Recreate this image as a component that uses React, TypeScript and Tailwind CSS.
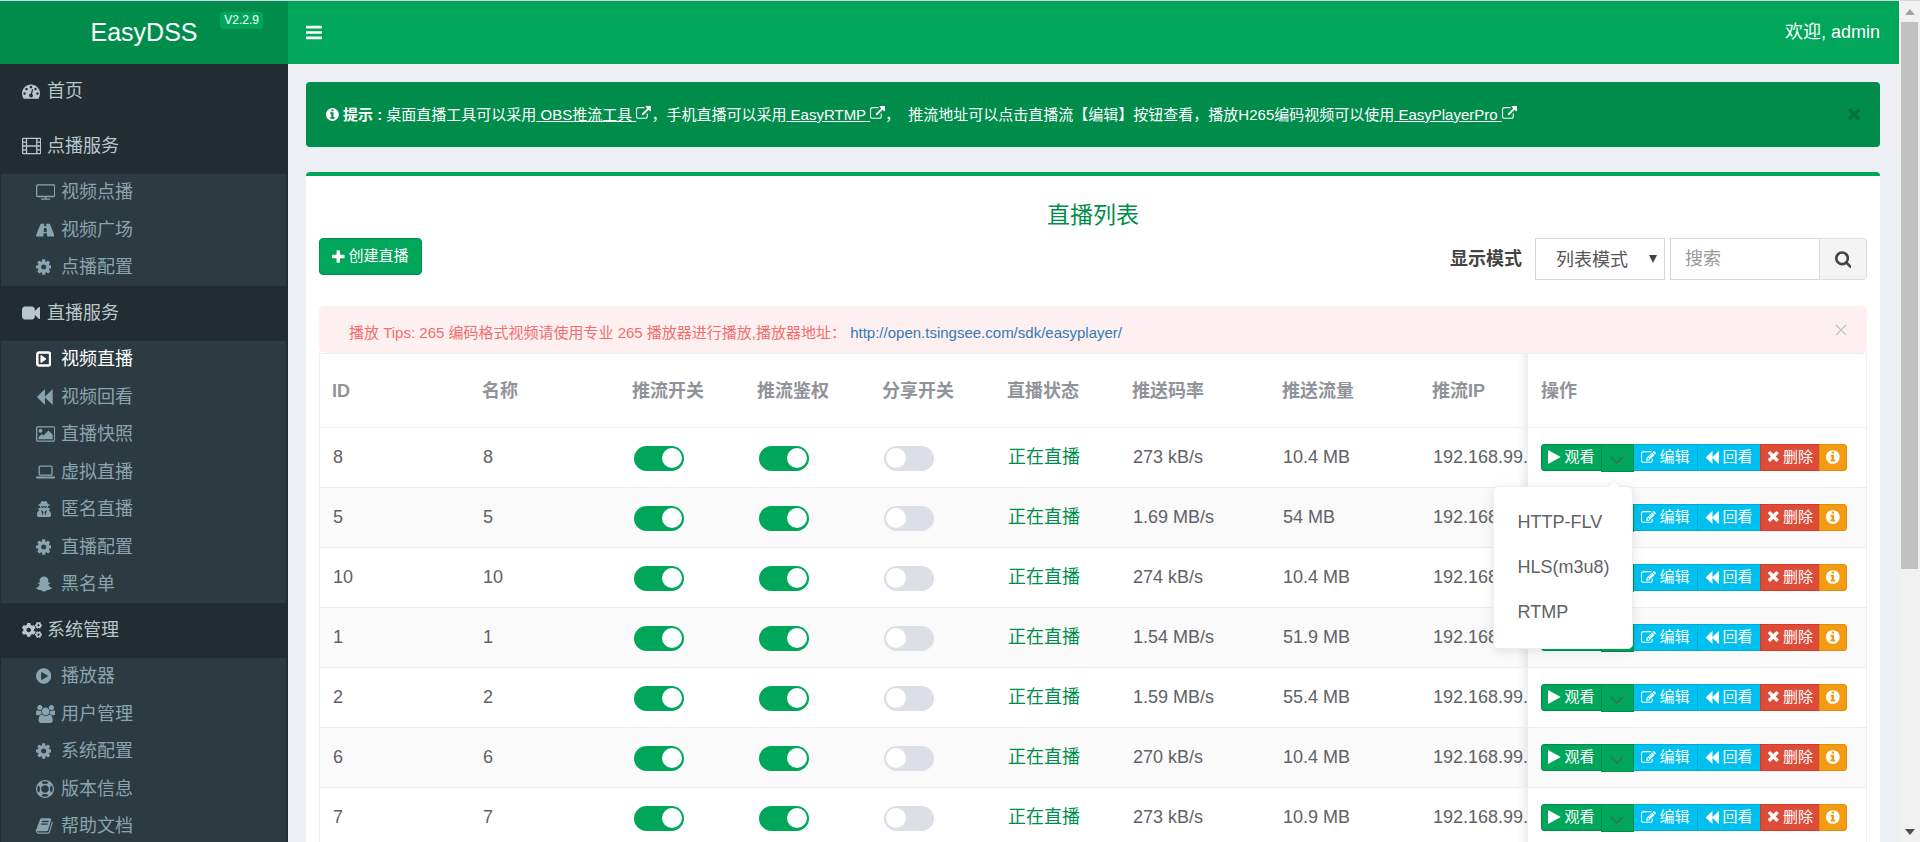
import React, { useState } from 'react'
import { FaCogs, FaSnapchatGhost, FaUserSecret } from 'react-icons/fa'
import { clsx } from 'clsx'

interface GlyphProps {
  name: keyof typeof glyphs
  className?: string
}

// [viewBox, path]
const glyphs = {
  bars: ['128 0 1536 1792', 'M1664 1344v128q0 26-19 45t-45 19h-1408q-26 0-45-19t-19-45v-128q0-26 19-45t45-19h1408q26 0 45 19t19 45zm0-512v128q0 26-19 45t-45 19h-1408q-26 0-45-19t-19-45v-128q0-26 19-45t45-19h1408q26 0 45 19t19 45zm0-512v128q0 26-19 45t-45 19h-1408q-26 0-45-19t-19-45v-128q0-26 19-45t45-19h1408q26 0 45 19t19 45z'],
  dashboard: ['0 0 1792 1792', 'M384 1152q0-53-37.5-90.5t-90.5-37.5-90.5 37.5-37.5 90.5 37.5 90.5 90.5 37.5 90.5-37.5 37.5-90.5zm192-448q0-53-37.5-90.5t-90.5-37.5-90.5 37.5-37.5 90.5 37.5 90.5 90.5 37.5 90.5-37.5 37.5-90.5zm428 481l101-382q6-26-7.5-48.5t-38.5-29.5-48 6.5-30 39.5l-101 382q-60 5-107 43.5t-63 98.5q-20 77 20 146t117 89 146-20 89-117q16-60-6-117t-72-91zm660-33q0-53-37.5-90.5t-90.5-37.5-90.5 37.5-37.5 90.5 37.5 90.5 90.5 37.5 90.5-37.5 37.5-90.5zm-640-640q0-53-37.5-90.5t-90.5-37.5-90.5 37.5-37.5 90.5 37.5 90.5 90.5 37.5 90.5-37.5 37.5-90.5zm448 192q0-53-37.5-90.5t-90.5-37.5-90.5 37.5-37.5 90.5 37.5 90.5 90.5 37.5 90.5-37.5 37.5-90.5zm320 448q0 261-141 483-19 29-54 29h-1402q-35 0-54-29-141-221-141-483 0-182 71-348t191-286 286-191 348-71 348 71 286 191 191 286 71 348z'],
  film: ['0 0 1920 1792', 'M160 64h1600q66 0 113 47t47 113v1344q0 66-47 113t-113 47h-1600q-66 0-113-47t-47-113v-1344q0-66 47-113t113-47zM128 192v256h256v-256zM128 576v256h256v-256zM128 960v256h256v-256zM128 1344v256h256v-256zM512 192v640h896v-640zM512 960v640h896v-640zM1536 192v256h256v-256zM1536 576v256h256v-256zM1536 960v256h256v-256zM1536 1344v256h256v-256z'],
  tv: ['0 0 1920 1792', 'M1792 1248v-960q0-13-9.5-22.5t-22.5-9.5h-1600q-13 0-22.5 9.5t-9.5 22.5v960q0 13 9.5 22.5t22.5 9.5h1600q13 0 22.5-9.5t9.5-22.5zm128-960v960q0 66-47 113t-113 47h-736v128h352q14 0 23 9t9 23v64q0 14-9 23t-23 9h-832q-14 0-23-9t-9-23v-64q0-14 9-23t23-9h352v-128h-736q-66 0-113-47t-47-113v-960q0-66 47-113t113-47h1600q66 0 113 47t47 113z'],
  road: ['40 0 1840 1792', 'M1111 1061v-4l-24-320q-1-13-11-22.5t-23-9.5h-186q-13 0-23 9.5t-11 22.5l-24 320v4q-1 12 8 20t21 8h244q12 0 21-8t8-20zm759 407q0 73-46 73h-704q13 0 22-9.5t8-22.5l-20-256q-1-13-11-22.5t-23-9.5h-272q-13 0-23 9.5t-11 22.5l-20 256q-1 13 8 22.5t22 9.5h-704q-46 0-46-73 0-54 26-116l417-1044q8-19 26-33t38-14h339q-13 0-23 9.5t-11 22.5l-15 192q-1 14 8 23t22 9h166q13 0 22-9t8-23l-15-192q-1-13-11-22.5t-23-9.5h339q20 0 38 14t26 33l417 1044q26 62 26 116z'],
  cog: ['128 0 1536 1792', 'M1152 896q0-106-75-181t-181-75-181 75-75 181 75 181 181 75 181-75 75-181zm512-109v222q0 12-8 23t-20 13l-185 28q-19 54-39 91 35 50 107 138 10 12 10 25t-9 23q-27 37-99 108t-94 71q-12 0-26-9l-138-108q-44 23-91 38-16 136-29 186-7 28-36 28h-222q-14 0-24.5-8.5t-11.5-21.5l-28-184q-49-16-90-37l-141 107q-10 9-25 9-14 0-25-11-126-114-165-168-7-10-7-23 0-12 8-23 15-21 51-66.5t54-70.5q-27-50-41-99l-183-27q-13-2-21-12.5t-8-23.5v-222q0-12 8-23t19-13l186-28q14-46 39-92-40-57-107-138-10-12-10-24 0-10 9-23 26-36 98.5-107.5t94.5-71.5q13 0 26 10l138 107q44-23 91-38 16-136 29-186 7-28 36-28h222q14 0 24.5 8.5t11.5 21.5l28 184q49 16 90 37l142-107q9-9 24-9 13 0 25 10 129 119 165 170 7 8 7 22 0 12-8 23-15 21-51 66.5t-54 70.5q26 50 41 98l183 28q13 2 21 12.5t8 23.5z'],
  video: ['0 0 1792 1792', 'M1792 352v1088q0 42-39 59-13 5-25 5-27 0-45-19l-403-403v166q0 119-84.5 203.5t-203.5 84.5h-704q-119 0-203.5-84.5t-84.5-203.5v-704q0-119 84.5-203.5t203.5-84.5h704q119 0 203.5 84.5t84.5 203.5v165l403-402q18-19 45-19 12 0 25 5 39 17 39 59z'],
  playSquare: ['128 0 1536 1792', 'M1145 896q0 33-27 52l-448 320q-31 23-66 5-35-17-35-57v-640q0-40 35-57 35-18 66 5l448 320q27 19 27 52zm263 480v-960q0-14-9-23t-23-9h-960q-14 0-23 9t-9 23v960q0 14 9 23t23 9h960q14 0 23-9t9-23zm256-960v960q0 119-84.5 203.5t-203.5 84.5h-960q-119 0-203.5-84.5t-84.5-203.5v-960q0-119 84.5-203.5t203.5-84.5h960q119 0 203.5 84.5t84.5 203.5z'],
  backward: ['64 0 1664 1792', 'M1683 141q19-19 32-13t13 32v1472q0 26-13 32t-32-13l-710-710q-9-9-13-19v710q0 26-13 32t-32-13l-710-710q-19-19-19-45t19-45l710-710q19-19 32-13t13 32v710q4-10 13-19z'],
  picture: ['-64 0 1920 1792', 'M576 576q0 80-56 136t-136 56-136-56-56-136 56-136 136-56 136 56 56 136zm1024 384v448h-1408v-192l320-320 160 160 512-512zm96-704h-1600q-13 0-22.5 9.5t-9.5 22.5v1216q0 13 9.5 22.5t22.5 9.5h1600q13 0 22.5-9.5t9.5-22.5v-1216q0-13-9.5-22.5t-22.5-9.5zm160 32v1216q0 66-47 113t-113 47h-1600q-66 0-113-47t-47-113v-1216q0-66 47-113t113-47h1600q66 0 113 47t47 113z'],
  laptop: ['0 -128 1920 1792', 'M416 1152q-66 0-113-47t-47-113v-704q0-66 47-113t113-47h1088q66 0 113 47t47 113v704q0 66-47 113t-113 47h-1088zm-32-864v704q0 13 9.5 22.5t22.5 9.5h1088q13 0 22.5-9.5t9.5-22.5v-704q0-13-9.5-22.5t-22.5-9.5h-1088q-13 0-22.5 9.5t-9.5 22.5zm1376 928h160v96q0 40-47 68t-113 28h-1600q-66 0-113-28t-47-68v-96h1760zm-720 96q16 0 16-16t-16-16h-160q-16 0-16 16t16 16h160z'],
  playCircle: ['128 0 1536 1792', 'M896 128q209 0 385.5 103t279.5 279.5 103 385.5-103 385.5-279.5 279.5-385.5 103-385.5-103-279.5-279.5-103-385.5 103-385.5 279.5-279.5 385.5-103zm384 823q32-18 32-55t-32-55l-544-320q-31-19-64-1-32 19-32 56v640q0 37 32 56 16 8 32 8 17 0 32-9z'],
  users: ['0 0 1920 1792', 'M593 896q-162 5-265 128h-134q-82 0-138-40.5t-56-118.5q0-353 124-353 6 0 43.5 21t97.5 42.5 119 21.5q67 0 133-23-5 37-5 66 0 139 81 256zm1071 637q0 120-73 189.5t-194 69.5h-874q-121 0-194-69.5t-73-189.5q0-53 3.5-103.5t14-109 26.5-108.5 43-97.5 62-81 85.5-53.5 111.5-20q10 0 43 21.5t73 48 107 48 135 21.5 135-21.5 107-48 73-48 43-21.5q61 0 111.5 20t85.5 53.5 62 81 43 97.5 26.5 108.5 14 109 3.5 103.5zm-1024-1277q0 106-75 181t-181 75-181-75-75-181 75-181 181-75 181 75 75 181zm704 384q0 159-112.5 271.5t-271.5 112.5-271.5-112.5-112.5-271.5 112.5-271.5 271.5-112.5 271.5 112.5 112.5 271.5zm576 225q0 78-56 118.5t-138 40.5h-134q-103-123-265-128 81-117 81-256 0-29-5-66 66 23 133 23 59 0 119-21.5t97.5-42.5 43.5-21q124 0 124 353zm-128-609q0 106-75 181t-181 75-181-75-75-181 75-181 181-75 181 75 75 181z'],
  lifeRing: ['0 0 1792 1792', 'M896 0q182 0 348 71t286 191 191 286 71 348-71 348-191 286-286 191-348 71-348-71-286-191-191-286-71-348 71-348 191-286 286-191 348-71zm0 128q-190 0-361 90l194 194q82-28 167-28t167 28l194-194q-171-90-361-90zm-678 1129l194-194q-28-82-28-167t28-167l-194-194q-90 171-90 361t90 361zm678 407q190 0 361-90l-194-194q-82 28-167 28t-167-28l-194 194q171 90 361 90zm0-384q159 0 271.5-112.5t112.5-271.5-112.5-271.5-271.5-112.5-271.5 112.5-112.5 271.5 112.5 271.5 271.5 112.5zm484-217l194 194q90-171 90-361t-90-361l-194 194q28 82 28 167t-28 167z'],
  book: ['64 0 1664 1792', 'M1703 478q40 57 18 129l-275 906q-19 64-76.5 107.5t-122.5 43.5h-923q-77 0-148.5-53.5t-99.5-131.5q-24-67-2-127 0-4 3-27t4-37q1-8-3-21.5t-3-19.5q2-11 8-21t16.5-23.5 16.5-23.5q23-38 45-91.5t30-91.5q3-10 .5-30t-.5-28q3-11 17-28t17-23q21-36 42-92t25-90q1-9-2.5-32t.5-28q4-13 22-30.5t22-22.5q19-26 42.5-84.5t27.5-96.5q1-8-3-25.5t-2-26.5q2-8 9-18t18-23 17-21q8-12 16.5-30.5t15-35 16-36 19.5-32 26.5-23.5 36-11.5 47.5 5.5l-1 3q38-9 51-9h761q74 0 114 56t18 130l-274 906q-36 119-71.5 153.5t-128.5 34.5h-869q-27 0-38 15-11 16-1 43 24 70 144 70h923q29 0 56-15.5t35-41.5l300-987q7-22 5-57 38 15 59 43zm-1064 2q-4 13 2 22.5t20 9.5h608q13 0 25.5-9.5t16.5-22.5l21-64q4-13-2-22.5t-20-9.5h-608q-13 0-25.5 9.5t-16.5 22.5zm-83 256q-4 13 2 22.5t20 9.5h608q13 0 25.5-9.5t16.5-22.5l21-64q4-13-2-22.5t-20-9.5h-608q-13 0-25.5 9.5t-16.5 22.5z'],
  info: ['128 0 1536 1792', 'M1152 1376v-160q0-14-9-23t-23-9h-96v-512q0-14-9-23t-23-9h-320q-14 0-23 9t-9 23v160q0 14 9 23t23 9h96v320h-96q-14 0-23 9t-9 23v160q0 14 9 23t23 9h448q14 0 23-9t9-23zm-128-896v-160q0-14-9-23t-23-9h-192q-14 0-23 9t-9 23v160q0 14 9 23t23 9h192q14 0 23-9t9-23zm640 416q0 209-103 385.5t-279.5 279.5-385.5 103-385.5-103-279.5-279.5-103-385.5 103-385.5 279.5-279.5 385.5-103 385.5 103 279.5 279.5 103 385.5z'],
  external: ['0 0 1792 1792', 'M1408 928v320q0 119-84.5 203.5t-203.5 84.5h-832q-119 0-203.5-84.5t-84.5-203.5v-832q0-119 84.5-203.5t203.5-84.5h704q14 0 23 9t9 23v64q0 14-9 23t-23 9h-704q-66 0-113 47t-47 113v832q0 66 47 113t113 47h832q66 0 113-47t47-113v-320q0-14 9-23t23-9h64q14 0 23 9t9 23zm384-864v512q0 26-19 45t-45 19-45-19l-176-176-652 652q-10 10-23 10t-23-10l-114-114q-10-10-10-23t10-23l652-652-176-176q-19-19-19-45t19-45 45-19h512q26 0 45 19t19 45z'],
  plus: ['192 0 1408 1792', 'M1600 736v192q0 40-28 68t-68 28h-416v416q0 40-28 68t-68 28h-192q-40 0-68-28t-28-68v-416h-416q-40 0-68-28t-28-68v-192q0-40 28-68t68-28h416v-416q0-40 28-68t68-28h192q40 0 68 28t28 68v416h416q40 0 68 28t28 68z'],
  times: ['192 128 1408 1792', 'M1490 1322q0 40-28 68l-136 136q-28 28-68 28t-68-28l-294-294-294 294q-28 28-68 28t-68-28l-136-136q-28-28-28-68t28-68l294-294-294-294q-28-28-28-68t28-68l136-136q28-28 68-28t68 28l294 294 294-294q28-28 68-28t68 28l136 136q28 28 28 68t-28 68l-294 294 294 294q28 28 28 68z'],
  search: ['64 0 1664 1792', 'M1216 832q0-185-131.5-316.5t-316.5-131.5-316.5 131.5-131.5 316.5 131.5 316.5 316.5 131.5 316.5-131.5 131.5-316.5zm512 832q0 52-38 90t-90 38q-54 0-90-38l-343-342q-179 124-399 124-143 0-273.5-55.5t-225-150-150-225-55.5-273.5 55.5-273.5 150-225 225-150 273.5-55.5 273.5 55.5 225 150 150 225 55.5 273.5q0 220-124 399l343 343q37 37 37 90z'],
  play: ['192 0 1408 1792', 'M1576 927l-1328 738q-23 13-39.5 3t-16.5-36v-1472q0-26 16.5-36t39.5 3l1328 738q23 13 23 31t-23 31z'],
  edit: ['0 0 1792 1792', 'M888 1184l116-116-152-152-116 116v56h96v96h56zm440-720q-16-16-33 1l-350 350q-17 17-1 33t33-1l350-350q17-17 1-33zm80 594v190q0 119-84.5 203.5t-203.5 84.5h-832q-119 0-203.5-84.5t-84.5-203.5v-832q0-119 84.5-203.5t203.5-84.5h832q63 0 117 25 15 7 18 23 3 17-9 29l-49 49q-14 14-32 8-23-6-45-6h-832q-66 0-113 47t-47 113v832q0 66 47 113t113 47h832q66 0 113-47t47-113v-126q0-13 9-22l64-64q15-15 35-7t20 29zm-96-738l288 288-672 672h-288v-288zm444 132l-92 92-288-288 92-92q28-28 68-28t68 28l152 152q28 28 28 68t-28 68z'],
}

const Glyph: React.FC<GlyphProps> = ({ name, className }) => (
  <svg
    viewBox={glyphs[name][0]}
    fill="currentColor"
    fillRule="evenodd"
    aria-hidden="true"
    className={clsx('w-auto shrink-0', className)}
  >
    <path d={glyphs[name][1]} />
  </svg>
)

const navIcon = (name: keyof typeof glyphs) => <Glyph name={name} className="h-[18px]" />

const menu = [
  { label: '首页', icon: navIcon('dashboard'), items: [] },
  {
    label: '点播服务',
    icon: navIcon('film'),
    items: [
      { label: '视频点播', icon: navIcon('tv') },
      { label: '视频广场', icon: navIcon('road') },
      { label: '点播配置', icon: navIcon('cog') },
    ],
  },
  {
    label: '直播服务',
    icon: navIcon('video'),
    items: [
      { label: '视频直播', icon: navIcon('playSquare'), active: true },
      { label: '视频回看', icon: navIcon('backward') },
      { label: '直播快照', icon: navIcon('picture') },
      { label: '虚拟直播', icon: navIcon('laptop') },
      { label: '匿名直播', icon: <FaUserSecret className="size-4" /> },
      { label: '直播配置', icon: navIcon('cog') },
      { label: '黑名单', icon: <FaSnapchatGhost className="size-4" /> },
    ],
  },
  {
    label: '系统管理',
    icon: <FaCogs className="size-5" />,
    items: [
      { label: '播放器', icon: navIcon('playCircle') },
      { label: '用户管理', icon: navIcon('users') },
      { label: '系统配置', icon: navIcon('cog') },
      { label: '版本信息', icon: navIcon('lifeRing') },
      { label: '帮助文档', icon: navIcon('book') },
    ],
  },
]

const streams = [
  { id: 8, name: '8', rate: '273 kB/s', flow: '10.4 MB' },
  { id: 5, name: '5', rate: '1.69 MB/s', flow: '54 MB' },
  { id: 10, name: '10', rate: '274 kB/s', flow: '10.4 MB' },
  { id: 1, name: '1', rate: '1.54 MB/s', flow: '51.9 MB' },
  { id: 2, name: '2', rate: '1.59 MB/s', flow: '55.4 MB' },
  { id: 6, name: '6', rate: '270 kB/s', flow: '10.4 MB' },
  { id: 7, name: '7', rate: '273 kB/s', flow: '10.9 MB' },
]

const columns = [
  { title: 'ID', width: 'w-[150px]' },
  { title: '名称', width: 'w-[150px]' },
  { title: '推流开关', width: 'w-[125px]' },
  { title: '推流鉴权', width: 'w-[125px]' },
  { title: '分享开关', width: 'w-[125px]' },
  { title: '直播状态', width: 'w-[125px]' },
  { title: '推送码率', width: 'w-[150px]' },
  { title: '推送流量', width: 'w-[150px]' },
]

const edgeShade = 'bg-[linear-gradient(to_left,rgba(0,0,0,0.07),transparent_10px)]'

const Sidebar = () => (
  <nav className="w-72 shrink-0 bg-[#222d32] text-[18px] leading-6">
    {menu.map((group) => (
      <div key={group.label}>
        <a href="#" className="flex h-[55px] items-center pb-0.5 pl-[22px] text-[#b8c7ce]">
          <span className="flex w-[25px]">{group.icon}</span>
          {group.label}
        </a>
        {group.items.length > 0 && (
          <ul className="mr-0.5 ml-px bg-[#2c3b41]">
            {group.items.map((item) => (
              <li key={item.label} className="even:pt-px">
                <a
                  href="#"
                  className={clsx(
                    'flex h-[37px] items-center pb-0.5 pl-[35px]',
                    'active' in item ? 'text-white' : 'text-[#8aa4af]'
                  )}
                >
                  <span className="flex w-[25px]">{item.icon}</span>
                  {item.label}
                </a>
              </li>
            ))}
          </ul>
        )}
      </div>
    ))}
  </nav>
)

const Switch: React.FC<{ label: string; on?: boolean }> = ({ label, on = false }) => {
  const [checked, setChecked] = useState(on)

  return (
    <input
      type="checkbox"
      aria-label={label}
      checked={checked}
      onChange={() => setChecked(!checked)}
      className="mt-1 ml-px block h-[25px] w-[50px] appearance-none rounded-full bg-[#dcdfe6] p-[2px] before:block before:size-5 before:rounded-full before:bg-white checked:bg-[#00a65a] checked:before:translate-x-[26px]"
    />
  )
}

const PlayMenu = () => (
  <div className="absolute top-full right-px z-10 mt-3.5 w-[140px] rounded-[5px] border border-[#ebeef5] bg-white py-[13px] text-[18px] text-[#606266] shadow-[0_2px_12px_rgba(0,0,0,0.1)]">
    <svg viewBox="0 0 14 8" className="absolute -top-[7px] right-[11px] h-2 w-3.5" aria-hidden="true">
      <path d="M0 8 7 1l7 7z" fill="#fff" />
      <path d="M0 7.500 7 .5l7 7" fill="none" stroke="#ebeef5" />
    </svg>
    {['HTTP-FLV', 'HLS(m3u8)', 'RTMP'].map((format) => (
      <button key={format} type="button" className="block h-[45px] w-full pl-6 text-left">
        {format}
      </button>
    ))}
  </div>
)

const RowActions: React.FC<{ open: boolean; onToggle: () => void }> = ({ open, onToggle }) => (
  <div className="flex items-start pt-0.5 text-[15px] leading-5 text-white">
    <button type="button" className="flex h-[27px] items-center gap-1 rounded-l-[3px] border border-[#008d4c] bg-[#00a65a] px-1.5">
      <Glyph name="play" className="h-4" />
      观看
    </button>
    <div className="relative -ml-px">
      <button
        type="button"
        aria-label="选择格式"
        onClick={onToggle}
        className="flex h-7 w-[33px] items-center justify-center border border-[#008d4c] bg-[#00a65a] text-[#4f5f5a]"
      >
        <svg viewBox="0 0 14 8" className="mt-1 h-2 w-3.5 shrink-0" aria-hidden="true">
          <path d="m1 1 6 6 6-6" fill="none" stroke="currentColor" strokeWidth="1.1" />
        </svg>
      </button>
      {open && <PlayMenu />}
    </div>
    <button type="button" className="-ml-px flex h-[27px] items-center gap-1 border border-[#00acd6] bg-[#00c0ef] px-[7px]">
      <Glyph name="edit" className="h-[15px]" />
      编辑
    </button>
    <button type="button" className="-ml-px flex h-[27px] items-center gap-1 border border-[#00acd6] bg-[#00c0ef] px-[7px]">
      <Glyph name="backward" className="h-[15px]" />
      回看
    </button>
    <button type="button" className="-ml-px flex h-[27px] items-center gap-1 border border-[#d73925] bg-[#dd4b39] px-1.5">
      <Glyph name="times" className="h-4" />
      删除
    </button>
    <button
      type="button"
      aria-label="信息"
      className="-ml-px flex h-[27px] items-center rounded-r-[3px] border border-[#e08e0b] bg-[#f39c12] px-1.5"
    >
      <Glyph name="info" className="h-4" />
    </button>
  </div>
)

const StreamTable = () => {
  const [openId, setOpenId] = useState<number | null>(8)

  return (
    <table className="w-full table-fixed border-separate border-spacing-0 border-x border-t border-[#ebeef5] text-left leading-6 whitespace-nowrap">
      <thead className="text-[#909399]">
        <tr className="h-[74px]">
          {columns.map((column) => (
            <th key={column.title} className={clsx('border-b border-[#ebeef5] pl-3 font-bold', column.width)}>
              {column.title}
            </th>
          ))}
          <th className={clsx('overflow-hidden border-b border-[#ebeef5] pl-3 font-bold', edgeShade)}>推流IP</th>
          <th className="w-[338px] border-b border-[#ebeef5] pl-[13px] font-bold">操作</th>
        </tr>
      </thead>
      <tbody className="text-[#606266] [&_td]:border-b [&_td]:border-[#ebeef5] [&_td]:pb-0.5 [&_td]:pl-[13px]">
        {streams.map((stream) => (
          <tr key={stream.id} className="h-[60px] even:bg-[#fafafa]">
            <td>{stream.id}</td>
            <td>{stream.name}</td>
            <td>
              <Switch label="推流开关" on />
            </td>
            <td>
              <Switch label="推流鉴权" on />
            </td>
            <td>
              <Switch label="分享开关" />
            </td>
            <td className="text-[#008d4c]">正在直播</td>
            <td>{stream.rate}</td>
            <td>{stream.flow}</td>
            <td className={clsx('overflow-hidden', edgeShade)}>192.168.99.1</td>
            <td>
              <RowActions
                open={openId === stream.id}
                onToggle={() => setOpenId(openId === stream.id ? null : stream.id)}
              />
            </td>
          </tr>
        ))}
      </tbody>
    </table>
  )
}

const TipLink: React.FC<{ children: string }> = ({ children }) => (
  <a href="#">
    <span className="whitespace-pre underline">{` ${children} `}</span>
    <Glyph name="external" className="inline-block h-[15px] align-[-1px]" />
  </a>
)

const App = () => (
  <div className="flex h-screen overflow-hidden border-t border-[#d2d6de] bg-[#ecf0f5] font-['Liberation_Sans','Noto_Sans_CJK_SC',sans-serif] text-[18px] text-[#333]">
    <div className="flex min-w-0 flex-1 flex-col">
      <header className="flex h-[63px] shrink-0 bg-[#00a65a] text-white">
        <a href="#" className="relative flex w-72 shrink-0 items-center justify-center bg-[#008d4c] text-[25px]">
          EasyDSS
          <span className="absolute top-[11px] right-[25px] rounded-[4px] bg-[#00a65a] px-1 text-xs leading-[17px]">
            V2.2.9
          </span>
        </a>
        <div className="flex flex-1 items-center justify-between pr-[19px] pl-[18px]">
          <button type="button" aria-label="菜单">
            <Glyph name="bars" className="h-[19px]" />
          </button>
          <a href="#">欢迎, admin</a>
        </div>
      </header>

      <div className="flex min-h-0 flex-1">
        <Sidebar />

        <main className="min-w-0 flex-1 pt-[18px] pr-[19px] pl-[18px]">
          <div className="flex h-[65px] items-center justify-between rounded-[4px] bg-[#008d4c] pr-[19px] pl-5 text-[15px] leading-6 text-white">
            <p className="whitespace-pre">
              <Glyph name="info" className="inline-block h-[15px] align-[-2px]" />
              <b>{' 提示 : '}</b>
              桌面直播工具可以采用
              <TipLink>OBS推流工具</TipLink>
              ，手机直播可以采用
              <TipLink>EasyRTMP</TipLink>
              {'，  推流地址可以点击直播流【编辑】按钮查看，播放H265编码视频可以使用'}
              <TipLink>EasyPlayerPro</TipLink>
            </p>
            <button type="button" aria-label="关闭" className="text-black/20">
              <Glyph name="times" className="h-[18px]" />
            </button>
          </div>

          <section className="mt-[25px] rounded-[4px] border-t-4 border-[#00a65a] bg-white px-[13px] pt-[25px] pb-4 shadow-[0_1px_1px_rgba(0,0,0,0.1)]">
            <h4 className="text-center text-[23px] leading-7 text-[#008d4c]">直播列表</h4>

            <div className="mt-[9px] flex items-start justify-between">
              <button
                type="button"
                className="flex h-[37px] items-center gap-1 rounded-[4px] border border-[#008d4c] bg-[#00a65a] px-3 text-[15px] text-white"
              >
                <Glyph name="plus" className="h-4" />
                创建直播
              </button>

              <form className="flex items-center" onSubmit={(e) => e.preventDefault()}>
                <label htmlFor="mode" className="mr-[13px] font-bold text-[#444]">
                  显示模式
                </label>
                <div className="relative mr-[5px]">
                  <select
                    id="mode"
                    className="block h-[42px] w-[130px] appearance-none border border-[#d2d6de] bg-white pt-0.5 pl-5 text-[#555]"
                  >
                    <option>列表模式</option>
                  </select>
                  <svg viewBox="0 0 8 8" className="pointer-events-none absolute top-[17px] right-2 size-2 text-[#444]" aria-hidden="true">
                    <path d="M0 0h8L4 8z" fill="currentColor" />
                  </svg>
                </div>
                <input
                  type="text"
                  aria-label="搜索"
                  placeholder="搜索"
                  className="h-[42px] w-[149px] border border-r-0 border-[#d2d6de] px-3.5 placeholder:text-[#999]"
                />
                <button
                  type="submit"
                  aria-label="搜索"
                  className="flex h-[42px] w-12 items-center justify-center rounded-r-[4px] border border-[#ddd] bg-[#f4f4f4] text-[#444]"
                >
                  <Glyph name="search" className="h-[18px]" />
                </button>
              </form>
            </div>

            <div className="mt-[26px] flex h-[47px] items-center justify-between rounded-[5px] bg-[#fef0f0] pr-5 pl-[30px] text-[15px] leading-6 text-[#f56c6c]">
              <p className="pt-1.5">
                播放 Tips: 265 编码格式视频请使用专业 265 播放器进行播放,播放器地址：{' '}
                <a href="#" className="text-[#337ab7]">
                  http://open.tsingsee.com/sdk/easyplayer/
                </a>
              </p>
              <button type="button" aria-label="关闭" className="text-[#c0c4cc]">
                <svg viewBox="0 0 12 12" className="size-3" aria-hidden="true">
                  <path d="m1 1 10 10M11 1 1 11" fill="none" stroke="currentColor" strokeWidth="1.3" />
                </svg>
              </button>
            </div>

            <StreamTable />
          </section>
        </main>
      </div>
    </div>

    {/* scroll track */}
    <div className="flex w-[21px] shrink-0 flex-col items-center bg-[#f1f1f1] px-0.5 pt-2 pb-[7px]" aria-hidden="true">
      <svg viewBox="0 0 10 6" className="h-1.5 w-2.5 shrink-0 text-[#a3a3a3]">
        <path d="M0 6 5 0l5 6z" fill="currentColor" />
      </svg>
      <div className="mt-[7px] w-full flex-[546] bg-[#c1c1c1]" />
      <div className="flex-[260]" />
      <svg viewBox="0 0 10 6" className="h-1.5 w-2.5 shrink-0 text-[#505050]">
        <path d="m0 0 5 6 5-6z" fill="currentColor" />
      </svg>
    </div>
  </div>
)

export default App
